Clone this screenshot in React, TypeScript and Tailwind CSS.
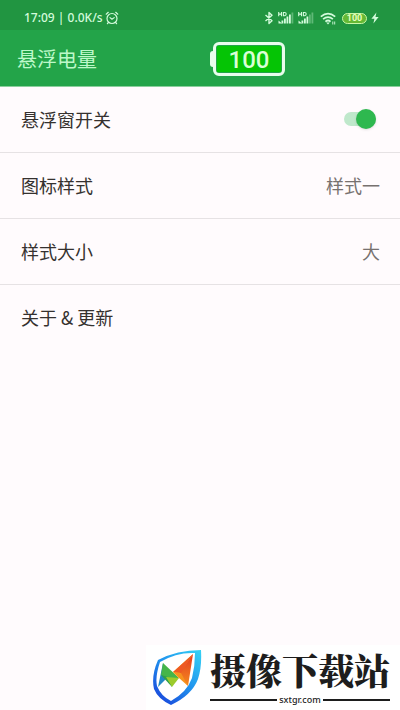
import { useState } from 'react'
import type { ReactNode } from 'react'

interface SettingRowProps {
  label: string
  value?: string
  divider?: boolean
}

function AlarmIcon() {
  return (
    <svg viewBox="0 0 14 14" className="size-3.5" fill="none" stroke="currentColor" strokeWidth="1.2" strokeLinecap="round">
      <circle cx="7" cy="7.5" r="5" />
      <path d="M1.2 3.2 3.3 1.3M12.8 3.2 10.7 1.3M5 6.6l2 1.7 2.2-1.7M3.4 11.5l-1 1.2M10.6 11.5l1 1.2" />
    </svg>
  )
}

function BluetoothIcon() {
  return (
    <svg viewBox="0 0 10 14" className="h-3.5 w-2.5" fill="none" stroke="currentColor" strokeWidth="1.4" strokeLinejoin="round">
      <path d="M1.5 4 8 9.8 5 12.5v-11L8 4.2 1.5 10" />
    </svg>
  )
}

/** Cellular bars under a small HD mark. `level` is the number of lit bars. */
function SignalIcon({ level }: { level: number }) {
  const heights = [3, 5, 7, 9, 11]
  return (
    <svg viewBox="0 0 16 14" className="h-3.5 w-4" fill="currentColor">
      <path d="M.7 1v4.2M3.5 1v4.2M.7 3.1h2.8M5.4 1.5h1.2q1.600 0 1.600 1.600t-1.600 1.600H5.4z" fill="none" stroke="currentColor" strokeWidth="1.1" />
      <path d="M.5 9.5v3H4z" />
      {heights.map((h, i) => (
        <rect key={h} x={3.5 + i * 2.5} y={12.5 - h} width="1.8" height={h} opacity={i < level ? 1 : 0.35} />
      ))}
    </svg>
  )
}

function WifiIcon() {
  return (
    <svg viewBox="0 0 16 13" className="h-[13px] w-4" fill="none" stroke="currentColor" strokeWidth="1.7">
      <path d="M.8 4.6q7.2-6 14.4 0M3.1 7.2q4.9-4.2 9.8 0M5.4 9.6q2.6-2.2 5.2 0" />
      <path d="M6.2 10.400h3.6L8 12.5z" fill="currentColor" stroke="none" />
      <path d="M12.8 9.5v3M14.7 9.5v3" strokeWidth=".9" />
    </svg>
  )
}

function BoltIcon() {
  return (
    <svg viewBox="0 0 8 12" className="h-3 w-2" fill="currentColor">
      <path d="M5.4.5.4 6.8h3L2.4 11.5 7.6 5H4.5z" />
    </svg>
  )
}

function StatusBar() {
  return (
    <div className="flex h-[30px] items-center justify-between bg-[#219541] pt-1.5 pr-[21px] pl-6 text-[#d4fbdc]">
      <div className="flex items-center gap-0.5">
        <span className="font-['Noto_Sans',sans-serif] text-[12px] leading-4 font-medium">17:09 | 0.0K/s</span>
        <AlarmIcon />
      </div>
      <div className="flex items-center gap-1">
        <BluetoothIcon />
        <SignalIcon level={4} />
        <SignalIcon level={3} />
        <span className="ml-0.5">
          <WifiIcon />
        </span>
        <span className="ml-0.5 flex h-[11px] w-[25px] items-center justify-center rounded-full border border-[#c9f7a6] bg-[#65b834] font-['Roboto',sans-serif] text-[9px] leading-none font-bold text-[#e5ffc2]">
          100
        </span>
        <BoltIcon />
      </div>
    </div>
  )
}

/** The floating battery that sits above whatever is on screen. */
function FloatingBattery({ level }: { level: number }) {
  return (
    <div className="absolute inset-y-0 left-[210px] flex items-center pt-0.5">
      <span className="h-4 w-[3px] rounded-l-sm bg-[#e9fdec]" />
      <span className="flex h-[34px] w-[72px] items-center justify-center rounded-md border-[3px] border-[#e9fdec] bg-[#23a449] p-px">
        <span className="flex h-full w-full items-center justify-center bg-[#05c405] pt-0.5 font-['Roboto',sans-serif] text-[24px] leading-none font-medium text-[#d9ffd5]">
          {level}
        </span>
      </span>
    </div>
  )
}

function Row({ children, divider = true }: { children: ReactNode; divider?: boolean }) {
  return (
    <li className={divider ? 'border-b border-[#e6e2e4]' : ''}>
      {children}
    </li>
  )
}

function SettingRow({ label, value, divider }: SettingRowProps) {
  return (
    <Row divider={divider}>
      <button type="button" className="flex h-[65px] w-full items-center justify-between pr-5 pb-0.5 pl-[21px] text-left">
        <span>{label}</span>
        {value && <span className="text-[#77716f]">{value}</span>}
      </button>
    </Row>
  )
}

function ShieldLogo() {
  return (
    <svg viewBox="0 0 50 57" className="h-[57px] w-[50px]">
      <defs>
        <linearGradient id="shield" x1="1" y1="0" x2="0.2" y2="1">
          <stop offset="0" stopColor="#35d3f5" />
          <stop offset="0.5" stopColor="#2196ee" />
          <stop offset="1" stopColor="#1948dc" />
        </linearGradient>
        <linearGradient id="flame" x1="0" y1="0" x2="0" y2="1">
          <stop offset="0" stopColor="#e23a22" />
          <stop offset="1" stopColor="#f58a1e" />
        </linearGradient>
      </defs>
      <path
        fill="url(#shield)"
        fillRule="evenodd"
        d="M6 11Q25 1 49 1Q50 18 46 30Q40 46 19 56Q6 50 2 40Q-1 27 6 11ZM8 13Q3 28 5 37Q9 47 19 52Q35 43 40 29Q43 17 43 4Q25 3 8 13Z"
      />
      <path fill="#2389c4" d="M11 14 6 38l9-9z" />
      <path fill="#45b549" d="M11 14 9 26l10 4 8-1z" />
      <path fill="#2f9f48" d="m9 26 11 12-1-9z" />
      <path fill="#9ccb2c" d="m14 28 13 1-7 9z" />
      <path fill="#f9c823" d="m21 23 20-18-12 19-2 5z" />
      <path fill="url(#flame)" d="m41 5-14 20 9 12z" />
      <path fill="#f6921e" d="m21 23 8 1 7 13-9-8z" />
      <path fill="#ee5a24" d="M41 5 21 23l8 1z" />
    </svg>
  )
}

function SiteBadge() {
  return (
    <footer className="mt-auto flex items-center gap-2 self-end bg-white pt-1 pr-2.5 pb-1 pl-1.5 text-[#1d1d1d]">
      <ShieldLogo />
      <div>
        <div className="pb-1 font-['Noto_Serif_CJK_SC','Noto_Sans_CJK_SC',serif] text-[36px] leading-10 font-black">摄像下载站</div>
        <div className="flex items-center gap-0.5">
          <span className="h-0.5 flex-1 bg-[#1d1d1d]" />
          <a href="#" className="font-['Noto_Sans',sans-serif] text-[9px] leading-3 font-medium">
            sxtgr.com
          </a>
          <span className="h-0.5 flex-1 bg-[#1d1d1d]" />
        </div>
      </div>
    </footer>
  )
}

export default function App() {
  const [enabled, setEnabled] = useState(true)

  return (
    <div className="flex min-h-screen flex-col bg-[#fffbfd] font-['Noto_Sans_CJK_SC',sans-serif]">
      <StatusBar />
      <header className="relative flex h-[57px] items-center border-b border-[#8bcf9d] bg-[#23a449] px-[17px] pt-0.5">
        <h1 className="text-[20px] leading-7 text-[#bdf8c9]">悬浮电量</h1>
        <FloatingBattery level={100} />
      </header>

      <ul className="text-[18px] leading-7 text-[#35312f]">
        <Row>
          <label className="flex h-[65px] items-center justify-between pr-6 pb-0.5 pl-[21px]">
            <span>悬浮窗开关</span>
            <span className="relative flex h-5 w-8 items-center">
              <input
                type="checkbox"
                role="switch"
                checked={enabled}
                onChange={(e) => setEnabled(e.target.checked)}
                className="peer absolute inset-0 appearance-none"
              />
              <span className="h-3.5 w-full rounded-full bg-[#c9c9c9] peer-checked:bg-[#bfe8cb]" />
              <span className="pointer-events-none absolute left-0 size-5 rounded-full bg-white shadow-sm peer-checked:right-0 peer-checked:left-auto peer-checked:bg-[#2eb84f]" />
            </span>
          </label>
        </Row>
        <SettingRow label="图标样式" value="样式一" />
        <SettingRow label="样式大小" value="大" />
        <SettingRow label="关于 & 更新" divider={false} />
      </ul>

      <SiteBadge />
    </div>
  )
}
